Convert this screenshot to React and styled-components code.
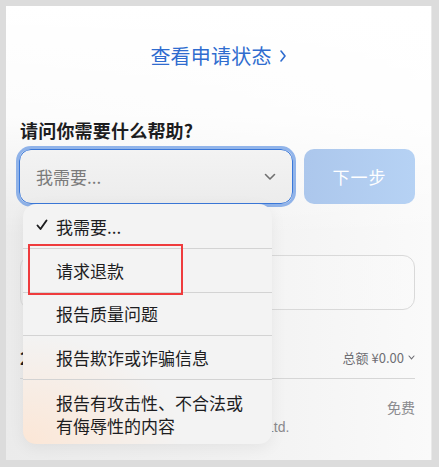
import React from "react";
import styled, { createGlobalStyle } from "styled-components";

const Global = createGlobalStyle`
  html, body { margin: 0; padding: 0; background: #dcdcdc; }
  body { font-family: "Noto Sans CJK SC", "Noto Sans", "Liberation Sans", sans-serif; }
  * { box-sizing: border-box; }
`;

const Panel = styled.div`
  position: relative;
  margin: 6px 0 0 6px;
  width: 426px;
  height: 454px;
  overflow: hidden;
  border-right: 1px solid #e9e9e9;
  background:
    linear-gradient(to bottom, #ffffff 0px, rgba(255,255,255,0.85) 110px, rgba(255,255,255,0) 230px),
    linear-gradient(to right, #ebebeb 0%, #f1f1f1 50%, #fafafa 100%);
  display: flex;
  flex-direction: column;
  padding: 0 16px 0 13px;
`;

const LinkRow = styled.a`
  margin-top: 36px;
  align-self: center;
  display: flex;
  align-items: center;
  gap: 8px;
  color: #2f6ccf;
  font-size: 20px;
  line-height: 28px;
  text-decoration: none;
  letter-spacing: 0.2px;
  margin-left: 2px;
`;

const Heading = styled.h2`
  margin: 47px 0 0 1px;
  font-size: 18px;
  line-height: 26px;
  font-weight: 700;
  color: #1d1d1f;
  letter-spacing: 0.2px;
`;

const FormRow = styled.div`
  margin-top: 6px;
  display: flex;
  gap: 11px;
  height: 55px;
`;

const Select = styled.div`
  flex: 0 0 274px;
  border: 1.5px solid #3a78d9;
  box-shadow: 0 0 0 3px rgba(110, 156, 228, 0.75);
  border-radius: 12px;
  background: linear-gradient(to bottom, #f3f3f3, #ececec);
  display: flex;
  align-items: center;
  justify-content: space-between;
  padding: 0 16px 0 16px;
  color: #7a7a7a;
  font-size: 17px;
`;

const NextButton = styled.button`
  flex: 1;
  border: none;
  border-radius: 10px;
  background: linear-gradient(to right, #acc7ec, #b6d2f4);
  color: #ffffff;
  font-family: inherit;
  font-size: 17px;
  letter-spacing: 1px;
`;

const InputBox = styled.div`
  margin: 51px 0 0 1px;
  height: 55px;
  border: 1px solid #d9d9d9;
  border-radius: 12px;
  background: linear-gradient(to right, rgba(236,236,236,0.6), rgba(250,250,250,0.6));
`;

const TotalRow = styled.div`
  margin: 37px 0 0 1px;
  height: 20px;
  display: flex;
  align-items: center;
  justify-content: space-between;
`;

const Count = styled.span`
  font-size: 17px;
  font-weight: 700;
  color: #1d1d1f;
`;

const Total = styled.span`
  display: flex;
  align-items: center;
  gap: 4px;
  font-size: 13px;
  color: #6e6e73;
`;

const Divider = styled.div`
  margin: 11px 0 0 1px;
  height: 1px;
  background: #d6d6d6;
`;

const SellerRow = styled.div`
  margin: 18px 0 0 1px;
  display: flex;
  justify-content: space-between;
`;

const SellerText = styled.div`
  padding: 20px 0 0 246px;
  font-size: 14px;
  line-height: 20px;
  color: #8a8a8e;
  font-family: "Liberation Sans", "Noto Sans CJK SC", sans-serif;
`;

const Price = styled.span`
  font-size: 14px;
  line-height: 20px;
  color: #8a8a8e;
`;

const Menu = styled.div`
  position: absolute;
  left: 17px;
  top: 198px;
  width: 249px;
  height: 240px;
  border-radius: 13px;
  overflow: hidden;
  background:
    radial-gradient(ellipse 160px 110px at 0% 100%, rgba(255, 226, 204, 0.75), rgba(255, 226, 204, 0) 100%),
    #f3f3f3;
  box-shadow: 0 4px 16px rgba(0,0,0,0.06);
  font-size: 17px;
  color: #1d1d1f;
`;

const MenuItem = styled.div`
  position: relative;
  display: flex;
  align-items: center;
  padding: 11px 0 11px 33px;
  line-height: ${p => (p.$multi ? "23px" : "21px")};
  border-top: ${p => (p.$first ? "none" : "1px solid #d3d3d3")};
  height: ${p => (p.$first ? "44px" : p.$multi ? "auto" : "43.5px")};
`;

const Check = styled.svg`
  position: absolute;
  left: 13px;
  top: 15px;
`;

const Highlight = styled.div`
  position: absolute;
  left: 5px;
  top: 40px;
  width: 155px;
  height: 51px;
  border: 2px solid #ef3b3d;
`;

export default function App() {
  return (
    <>
      <Global />
      <Panel>
        <LinkRow href="#">
          查看申请状态
          <svg width="6" height="12" viewBox="0 0 6 12">
            <polyline points="1,1 5,6 1,11" fill="none" stroke="#2f6ccf" strokeWidth="1.6" strokeLinecap="round" strokeLinejoin="round" />
          </svg>
        </LinkRow>
        <Heading>请问你需要什么帮助?</Heading>
        <FormRow>
          <Select>
            <span>我需要...</span>
            <svg width="12" height="8" viewBox="0 0 12 8">
              <polyline points="1.5,1.5 6,6 10.5,1.5" fill="none" stroke="#707070" strokeWidth="1.6" strokeLinecap="round" strokeLinejoin="round" />
            </svg>
          </Select>
          <NextButton>下一步</NextButton>
        </FormRow>
        <InputBox />
        <TotalRow>
          <Count>2</Count>
          <Total>
            总额 ¥0.00
            <svg width="7" height="5" viewBox="0 0 7 5">
              <polyline points="1,1 3.5,3.8 6,1" fill="none" stroke="#6e6e73" strokeWidth="1.1" strokeLinecap="round" />
            </svg>
          </Total>
        </TotalRow>
        <Divider />
        <SellerRow>
          <SellerText>Ltd.</SellerText>
          <Price>免费</Price>
        </SellerRow>

        <Menu>
          <MenuItem $first>
            <Check width="12" height="12" viewBox="0 0 12 12">
              <polyline points="1.5,6.5 4.5,10 10.5,1.5" fill="none" stroke="#1d1d1f" strokeWidth="1.9" strokeLinecap="round" strokeLinejoin="round" />
            </Check>
            我需要...
          </MenuItem>
          <MenuItem>请求退款</MenuItem>
          <MenuItem>报告质量问题</MenuItem>
          <MenuItem>报告欺诈或诈骗信息</MenuItem>
          <MenuItem $multi>报告有攻击性、不合法或<br />有侮辱性的内容</MenuItem>
          <Highlight />
        </Menu>
      </Panel>
    </>
  );
}
